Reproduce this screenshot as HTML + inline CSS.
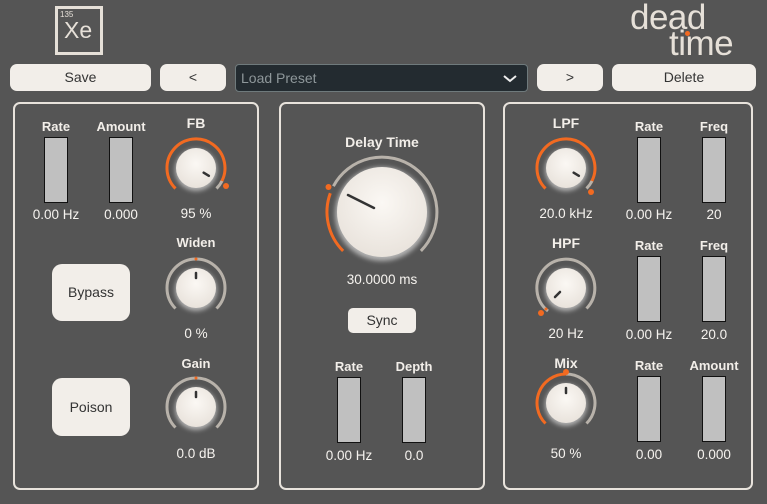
<!DOCTYPE html>
<html><head><style>
body{margin:0;width:767px;height:504px;background:#555555;font-family:"Liberation Sans",sans-serif;overflow:hidden;position:relative}
.a{position:absolute}
.btn{position:absolute;background:#f2eee9;border-radius:7px;color:#333;font-size:14px;text-align:center;box-sizing:border-box}
.panel{position:absolute;border:2px solid #e8e3dc;border-radius:7px;box-sizing:border-box}
.lbl{position:absolute;color:#f2eee9;font-size:13px;font-weight:bold;text-align:center;width:100px;margin-left:-50px}
.v{font-weight:normal;font-size:13.5px;color:#f6f3ef}
.sl{position:absolute;width:24px;height:66px;background:#c0c0c0;border:1.5px solid #111;box-sizing:border-box}
</style></head><body>
<div class="a" style="left:55px;top:6px;width:48px;height:49px;border:3px solid #e6e0d8;box-sizing:border-box"></div>
<div class="a" style="left:60px;top:10px;color:#e6e0d8;font-size:8px">135</div>
<div class="a" style="left:64px;top:17px;color:#e6e0d8;font-size:23px">Xe</div>
<div class="a" style="left:630px;top:2px;color:#e6e0d8;font-size:35px;line-height:32px;letter-spacing:-0.5px">dead</div>
<div class="a" style="left:669px;top:28px;color:#e6e0d8;font-size:35px;line-height:32px;letter-spacing:-0.5px">time</div>
<div class="a" style="left:685px;top:31px;width:5px;height:5px;border-radius:50%;background:#f26a21"></div>

<div class="btn" style="left:10px;top:64px;width:141px;height:27px;line-height:27px">Save</div>
<div class="btn" style="left:160px;top:64px;width:66px;height:27px;line-height:27px">&lt;</div>
<div class="a" style="left:235px;top:64px;width:293px;height:28px;background:#232b30;border:1px solid #6f7a7c;border-radius:4px;box-sizing:border-box;color:#8e979a;font-size:14px;line-height:26px;padding-left:5px">Load Preset
<svg class="a" style="right:10px;top:9px" width="14" height="9"><path d="M1 2 L7 7 L13 2" stroke="#eee" stroke-width="2" fill="none"/></svg></div>
<div class="btn" style="left:537px;top:64px;width:66px;height:27px;line-height:27px">&gt;</div>
<div class="btn" style="left:612px;top:64px;width:144px;height:27px;line-height:27px">Delete</div>

<div class="panel" style="left:13px;top:102px;width:246px;height:388px"></div>
<div class="panel" style="left:279px;top:102px;width:206px;height:388px"></div>
<div class="panel" style="left:503px;top:102px;width:250px;height:388px"></div>

<!-- left -->
<div class="lbl" style="left:56px;top:119px">Rate</div>
<div class="lbl" style="left:121px;top:119px">Amount</div>
<div class="sl" style="left:44px;top:137px"></div>
<div class="sl" style="left:109px;top:137px"></div>
<div class="lbl v" style="left:56px;top:207px">0.00 Hz</div>
<div class="lbl v" style="left:121px;top:207px">0.000</div>
<div class="lbl" style="left:196px;top:115px;font-size:14px">FB</div>
<div class="lbl v" style="left:196px;top:206px">95 %</div>
<div class="lbl" style="left:196px;top:235px">Widen</div>
<div class="lbl v" style="left:196px;top:326px">0 %</div>
<div class="lbl" style="left:196px;top:356px">Gain</div>
<div class="lbl v" style="left:196px;top:446px">0.0 dB</div>
<div class="btn" style="left:52px;top:264px;width:78px;height:57px;line-height:57px;border-radius:10px">Bypass</div>
<div class="btn" style="left:52px;top:378px;width:78px;height:58px;line-height:58px;border-radius:10px">Poison</div>

<!-- center -->
<div class="lbl" style="left:382px;top:134px;font-size:14px">Delay Time</div>
<div class="lbl v" style="left:382px;top:272px">30.0000 ms</div>
<div class="btn" style="left:348px;top:308px;width:68px;height:25px;line-height:25px;border-radius:5px">Sync</div>
<div class="lbl" style="left:349px;top:359px">Rate</div>
<div class="lbl" style="left:414px;top:359px">Depth</div>
<div class="sl" style="left:337px;top:377px"></div>
<div class="sl" style="left:402px;top:377px"></div>
<div class="lbl v" style="left:349px;top:448px">0.00 Hz</div>
<div class="lbl v" style="left:414px;top:448px">0.0</div>

<!-- right -->
<div class="lbl" style="left:566px;top:115px;font-size:14px">LPF</div>
<div class="lbl v" style="left:566px;top:206px">20.0 kHz</div>
<div class="lbl" style="left:566px;top:235px;font-size:14px">HPF</div>
<div class="lbl v" style="left:566px;top:326px">20 Hz</div>
<div class="lbl" style="left:566px;top:355px;font-size:14px">Mix</div>
<div class="lbl v" style="left:566px;top:446px">50 %</div>
<div class="lbl" style="left:649px;top:119px">Rate</div>
<div class="lbl" style="left:714px;top:119px">Freq</div>
<div class="sl" style="left:637px;top:137px"></div>
<div class="sl" style="left:702px;top:137px"></div>
<div class="lbl v" style="left:649px;top:207px">0.00 Hz</div>
<div class="lbl v" style="left:714px;top:207px">20</div>
<div class="lbl" style="left:649px;top:238px">Rate</div>
<div class="lbl" style="left:714px;top:238px">Freq</div>
<div class="sl" style="left:637px;top:256px"></div>
<div class="sl" style="left:702px;top:256px"></div>
<div class="lbl v" style="left:649px;top:327px">0.00 Hz</div>
<div class="lbl v" style="left:714px;top:327px">20.0</div>
<div class="lbl" style="left:649px;top:358px">Rate</div>
<div class="lbl" style="left:714px;top:358px">Amount</div>
<div class="sl" style="left:637px;top:376px"></div>
<div class="sl" style="left:702px;top:376px"></div>
<div class="lbl v" style="left:649px;top:447px">0.00</div>
<div class="lbl v" style="left:714px;top:447px">0.000</div>

<svg class="a" style="left:0;top:0" width="767" height="504">
<defs>
<radialGradient id="kg" cx="0.5" cy="0.4" r="0.6"><stop offset="0" stop-color="#fbf8f4"/><stop offset="1" stop-color="#e9e3dc"/></radialGradient>
<filter id="gl" x="-50%" y="-50%" width="200%" height="200%"><feGaussianBlur stdDeviation="2.5"/></filter>
</defs>
<g fill="none" stroke-width="3">
<path d="M175.5 188.5 A29 29 0 1 1 220.7 183.1" stroke="#f26a21"/>
<path d="M222 181 A29 29 0 0 1 216.5 188.5" stroke="#b8b2aa"/>
<path d="M175.5 308.5 A29 29 0 1 1 216.5 308.5" stroke="#b8b2aa"/>
<path d="M175.5 427.5 A29 29 0 1 1 216.5 427.5" stroke="#b8b2aa"/>
<path d="M343.1 250.9 A55 55 0 0 1 330.3 193.2" stroke="#f26a21"/>
<path d="M333.4 186.2 A55 55 0 1 1 420.9 250.9" stroke="#b8b2aa"/>
<path d="M545.5 188.5 A29 29 0 1 1 590.7 183.1" stroke="#f26a21"/>
<path d="M592 181 A29 29 0 0 1 586.5 188.5" stroke="#b8b2aa"/>
<path d="M548 311 A29 29 0 1 1 586.5 308.5" stroke="#b8b2aa"/>
<path d="M545.5 423.5 A29 29 0 0 1 566 374" stroke="#f26a21"/>
<path d="M566 374 A29 29 0 0 1 586.5 423.5" stroke="#b8b2aa"/>
</g>
<g fill="#f26a21">
<circle cx="226" cy="186" r="3"/><circle cx="196" cy="259" r="1.5"/><circle cx="196" cy="378" r="1.5"/>
<circle cx="328.5" cy="187" r="3"/><circle cx="591" cy="192" r="3"/><circle cx="541" cy="313" r="3"/><circle cx="546" cy="309" r="1.5"/><circle cx="566" cy="372" r="3"/>
</g>
<g fill="#fff" opacity="0.55" filter="url(#gl)">
<circle cx="196" cy="170" r="21"/><circle cx="196" cy="290" r="21"/><circle cx="196" cy="409" r="21"/>
<circle cx="382" cy="214" r="47"/><circle cx="566" cy="170" r="21"/><circle cx="566" cy="290" r="21"/><circle cx="566" cy="405" r="21"/>
</g>
<g fill="url(#kg)">
<circle cx="196" cy="168" r="20"/><circle cx="196" cy="288" r="20"/><circle cx="196" cy="407" r="20"/>
<circle cx="382" cy="212" r="45"/><circle cx="566" cy="168" r="20"/><circle cx="566" cy="288" r="20"/><circle cx="566" cy="403" r="20"/>
</g>
<g stroke="#333" stroke-width="2.5" stroke-linecap="round">
<path d="M203.7 172.7 L208.8 175.8"/>
<path d="M196 273 L196 278"/>
<path d="M196 392 L196 397"/>
<path d="M374 208 L348 195"/>
<path d="M573.7 172.7 L578.8 175.8"/>
<path d="M560 292 L555 297"/>
<path d="M566 388 L566 393"/>
</g>
</svg>
</body></html>
